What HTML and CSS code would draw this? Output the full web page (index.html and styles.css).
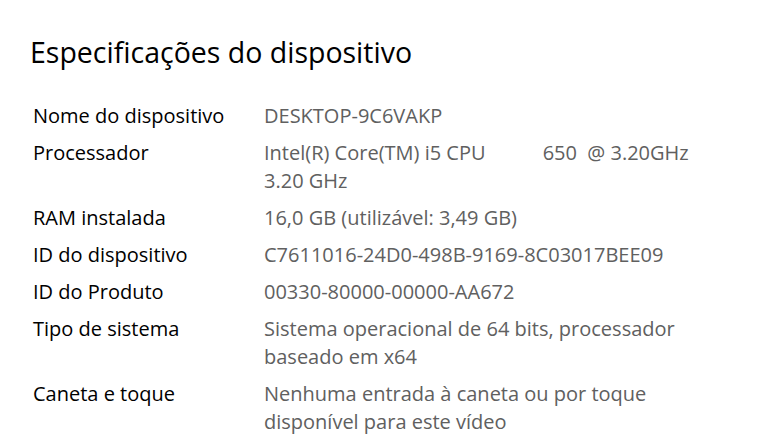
FILE: index.html
```html
<!DOCTYPE html>
<html lang="pt">
<head>
    <meta charset="UTF-8">
    <meta name="viewport" content="width=device-width, initial-scale=1.0">
    <title>Especificações do dispositivo</title>
    <link rel="stylesheet" href="styles.css">
</head>
<body>
    <section class="specs">
        <h1 class="specs-title">Especificações do dispositivo</h1>
        <dl class="specs-list">
            <dt>Nome do dispositivo</dt>
            <dd>DESKTOP-9C6VAKP</dd>

            <dt>Processador</dt>
            <dd class="pre">Intel(R) Core(TM) i5 CPU           650  @ 3.20GHz<br>3.20 GHz</dd>

            <dt>RAM instalada</dt>
            <dd>16,0 GB (utilizável: 3,49 GB)</dd>

            <dt>ID do dispositivo</dt>
            <dd>C7611016-24D0-498B-9169-8C03017BEE09</dd>

            <dt>ID do Produto</dt>
            <dd>00330-80000-00000-AA672</dd>

            <dt>Tipo de sistema</dt>
            <dd>Sistema operacional de 64 bits, processador<br>baseado em x64</dd>

            <dt>Caneta e toque</dt>
            <dd>Nenhuma entrada à caneta ou por toque<br>disponível para este vídeo</dd>
        </dl>
    </section>
</body>
</html>
```

FILE: styles.css
```css
body {
    margin: 0;
    background-color: #fff;
    color: #000;
    font-family: "Open Sans", "Noto Sans", sans-serif;
}
.specs {
    padding: 30px 0 0 30px;
}
.specs-title {
    margin: 0 0 28px;
    font-size: 28.5px;
    font-weight: 400;
    line-height: 44px;
}
.specs-list {
    display: grid;
    grid-template-columns: 231px 1fr;
    row-gap: 9px;
    margin: 0 0 0 3px;
    font-size: 20px;
    line-height: 28px;
}
.specs-list dt {
    color: #000;
}
.specs-list dd {
    margin: 0;
    color: #606060;
}
.pre {
    white-space: pre;
}
```
